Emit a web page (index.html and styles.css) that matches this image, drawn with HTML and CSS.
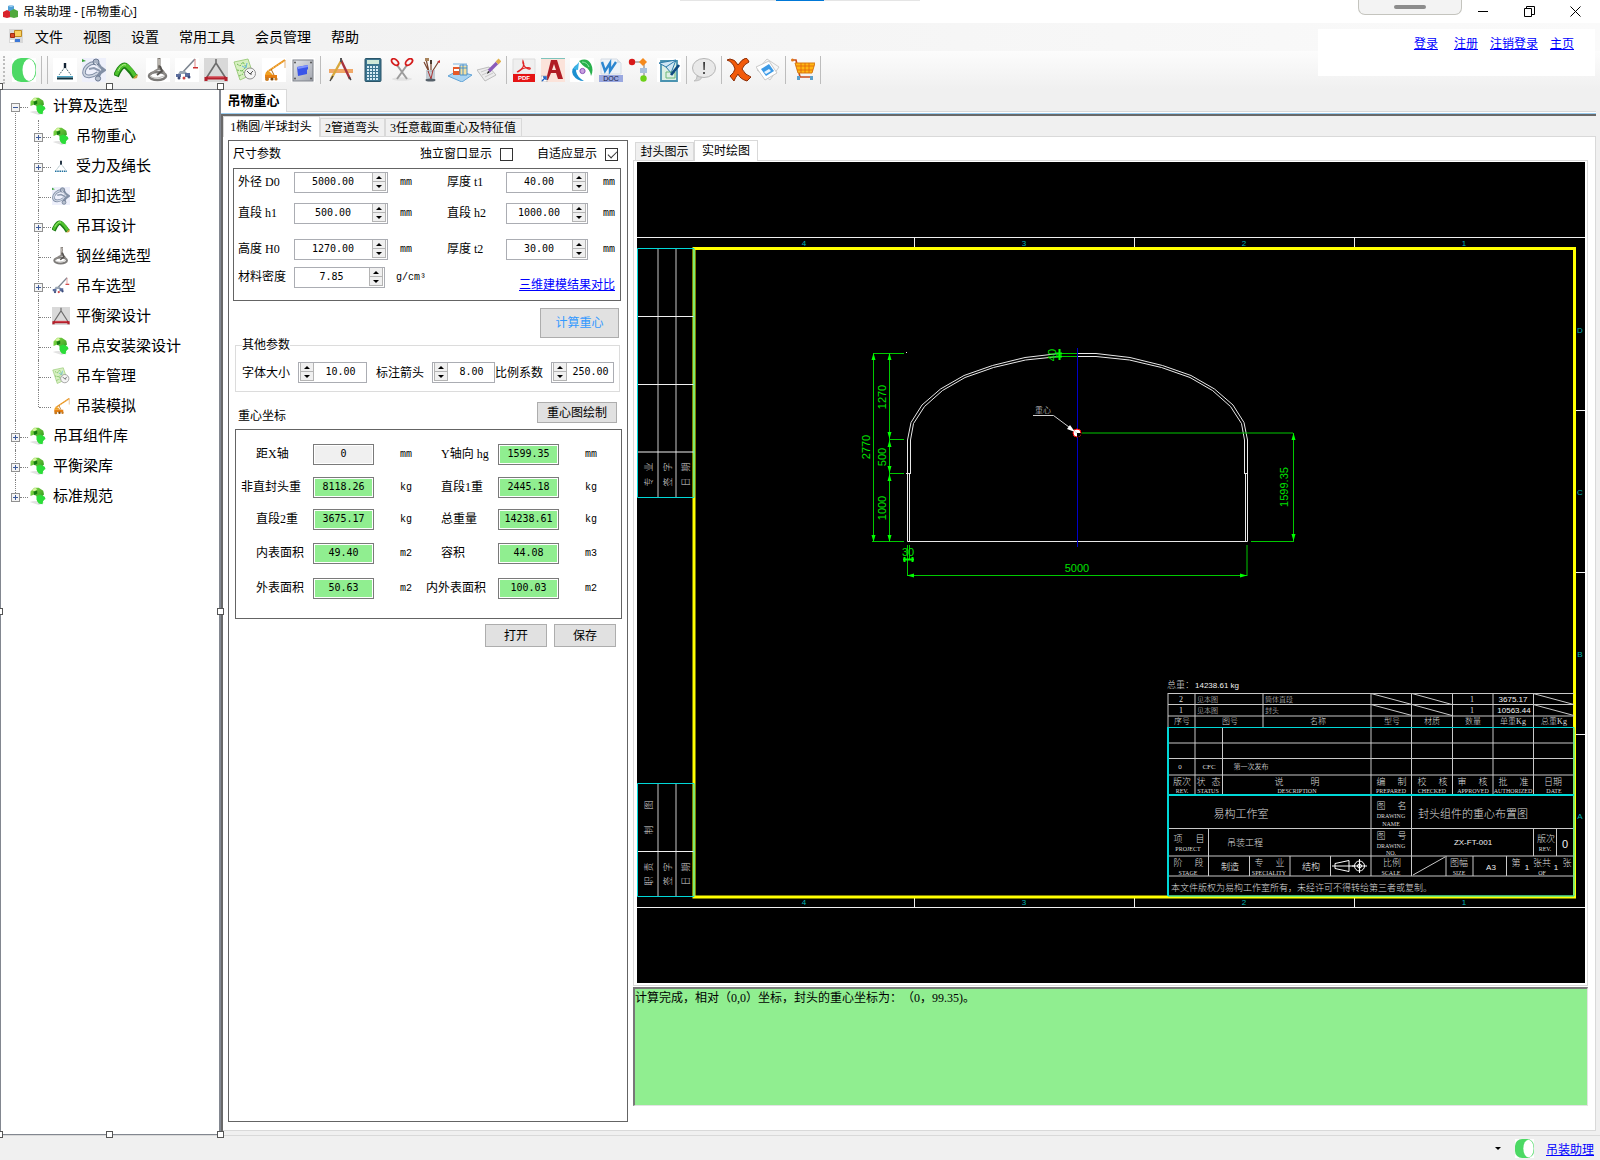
FILE: index.html
```html
<!DOCTYPE html>
<html lang="zh">
<head>
    <meta charset="UTF-8">
    <meta name="viewport" content="width=device-width, initial-scale=1.0">
    <title>吊装助理 - [吊物重心]</title>
    <link rel="stylesheet" href="styles.css">
</head>
<body>
    <!-- 图标库 -->
    <svg class="sprite" aria-hidden="true">
        <defs>
            <linearGradient id="gGreen" x1="0" y1="0" x2="1" y2="1"><stop offset="0" stop-color="#8be04a"/><stop offset="1" stop-color="#1d8a16"/></linearGradient>
            <linearGradient id="gSteel" x1="0" y1="0" x2="1" y2="1"><stop offset="0" stop-color="#e3e5ea"/><stop offset="1" stop-color="#a3a7b0"/></linearGradient>
        </defs>
        <symbol id="i-toggle" viewBox="0 0 24 24">
            <path d="M0 0h24v24H0z" fill="#fff"/><rect width="24" height="24" rx="9" fill="#4cd964"/><ellipse cx="17" cy="12" rx="6.5" ry="11" fill="#fff"/>
        </symbol>
        <symbol id="i-force" viewBox="0 0 24 24">
            <path d="M0 0h24v24H0z" fill="#fff"/><path d="M12 9L6 17M12 9l6 8" stroke="#4a6a75" stroke-width="1" stroke-dasharray="2 1" fill="none"/><path d="M12 5v5" stroke="#123" stroke-width="2.400"/><path d="M4 18h16v1.500H4z" fill="#4fa8c8"/><path d="M4 19.500h16v2H4z" fill="#11323e"/>
        </symbol>
        <symbol id="i-force-sm" viewBox="0 0 24 24">
            <path d="M12 9L6 17M12 9l6 8" stroke="#7d99a3" stroke-dasharray="2 1" fill="none"/><path d="M12 5v5" stroke="#123" stroke-width="2.400"/><path d="M4 19h16" stroke="#1e6f9c" stroke-width="2" stroke-dasharray="2 1"/>
        </symbol>
        <symbol id="i-shackle" viewBox="0 0 24 24">
            <path d="M0 0h24v24H0z" fill="#eef0fb"/><path d="M0 1l4 2-4 1z" fill="#39a339"/><path d="M14 5C8 4 2 9 2 15c1 5 8 4 14 0" fill="none" stroke="#7d8ba3" stroke-width="3.6"/><path d="M14 5C8 4 2 9 2 15c1 5 8 4 14 0" fill="none" stroke="#cfd6e2" stroke-width="1.6"/><path d="M14 3l4 6 4 3-4 3-3 6" fill="none" stroke="#8390a6" stroke-width="3.4"/><path d="M7 11l5-1 6 3" fill="none" stroke="#8d99ae" stroke-width="2"/><circle cx="14" cy="4" r="3" fill="#a9b3c4" stroke="#6c7a92"/><circle cx="16" cy="20.5" r="2.6" fill="#b7c0ce" stroke="#6c7a92"/><path d="M13 5l6 7" stroke="#e8ecf3"/>
        </symbol>
        <symbol id="i-lug" viewBox="0 0 24 24">
            <path d="M2 18Q8 4 13 9T21 19" fill="none" stroke="#1b7a14" stroke-width="6"/><path d="M2 17Q8 4 13 8T21 18" fill="none" stroke="#4fc22e" stroke-width="3.6"/><path d="M4 13Q8 5 12 7" fill="none" stroke="#b5f08a"/><path d="M19 21l4-1 1-4-3 2z" fill="#c9a23a"/>
        </symbol>
        <symbol id="i-rope" viewBox="0 0 24 24">
            <path d="M0 0h24v24H0z" fill="#fff"/><path d="M13 0v12" stroke="#77726c" stroke-width="3"/><path d="M12 1l2 1-2 1 2 1-2 1 2 1-2 1" stroke="#c9c4bd" fill="none"/><ellipse cx="11.500" cy="18" rx="8.500" ry="4" fill="none" stroke="#7c7a78" stroke-width="2.600"/><path d="M4 17q5-5 9-6 5 1 6 6" fill="none" stroke="#8f8c88" stroke-width="1.800"/><path d="M4 18q5 4 14 0" fill="none" stroke="#c4c2bf" stroke-width="1.2"/><path d="M14 8l2 5-5 4" fill="none" stroke="#55524f" stroke-width="2"/>
        </symbol>
        <symbol id="i-crane" viewBox="0 0 24 24">
            <path d="M0 0h24v24H0z" fill="#fff"/><path d="M7 15L20 1" stroke="#7c8590" stroke-width="1.600"/><path d="M20 1v8" stroke="#d88"/><path d="M18 9h5v1.500h-5z" fill="#c33"/><path d="M5 13l5 0 3 3H3z" fill="#9aa6b4"/><path d="M1 16h5v3H1zM10 15h5v4h-5z" fill="#5a6c9c"/><circle cx="4" cy="20" r="1.500" fill="#3a4a7a"/><circle cx="9" cy="20" r="1.500" fill="#c44"/><circle cx="14" cy="19" r="1.500" fill="#3a4a7a"/>
        </symbol>
        <symbol id="i-beam" viewBox="0 0 24 24">
            <path d="M0 0h24v24H0z" fill="#d9d9d9"/><path d="M12 1v4L3 19M12 5l9 14" fill="none" stroke="#6c6c6c" stroke-width="1.600"/><path d="M2 20h20M2 19v4M22 19v4" stroke="#b3202c" stroke-width="3"/><path d="M4 19h16" stroke="#e4606a"/>
        </symbol>
        <symbol id="i-map" viewBox="0 0 24 24">
            <path d="M1 4l14-3 5 15-13 6z" fill="#d7f0c0" stroke="#8fc46c" stroke-width=".8"/><path d="M4 6l3 2 3-4 3 5-4 4 5 4M4 12l5 1M6 18l4-2" fill="none" stroke="#6cb852" stroke-dasharray="2 1"/><path d="M9 8l4 2 1-5" fill="none" stroke="#6ab5dc"/><circle cx="17" cy="15.500" r="5.500" fill="#f4f4f4" stroke="#8e8e8e"/><path d="M14 13l3 3 3-3M17 16h2" stroke="#555" fill="none"/>
        </symbol>
        <symbol id="i-crane2" viewBox="0 0 24 24">
            <path d="M0 0h24v24H0z" fill="#fff"/><path d="M5 14L23 2" stroke="#e8921c" stroke-width="2"/><path d="M6 13L23 3" stroke="#ffd58a" stroke-dasharray="1 2"/><path d="M23 2v8" stroke="#d9a05a" stroke-width=".8"/><path d="M4 14h4l3 3H3z" fill="#f0a020"/><path d="M3 17h12v3H3z" fill="#e87f10"/><path d="M9 11l3 6" stroke="#b56a10"/><circle cx="5" cy="21" r="2" fill="#c87a20"/><circle cx="10" cy="21" r="1.600" fill="#7a4a10"/><circle cx="14" cy="21" r="1.600" fill="#c87a20"/>
        </symbol>
        <symbol id="i-plate" viewBox="0 0 24 24">
            <path d="M0 0h24v24H0z" fill="#fff"/><rect x="2" y="2" width="20" height="21" fill="url(#gSteel)" stroke="#7d8088"/><path d="M6 9l11-2 0 4-1 1v4L7 18z" fill="#3a55e8"/><path d="M6 9l11-2v2L7 11z" fill="#7d92ff"/><g fill="#555"><circle cx="4" cy="4.500" r="1"/><circle cx="20" cy="4.500" r="1"/><circle cx="4" cy="20.500" r="1"/><circle cx="20" cy="20.500" r="1"/></g>
        </symbol>
        <symbol id="i-compass" viewBox="0 0 24 24">
            <path d="M0 11h24v4H0z" fill="#f0a868"/><path d="M12 3L2 21" stroke="#d8a83c" stroke-width="2.400"/><path d="M12 2l9 19" stroke="#a8323c" stroke-width="2.400"/><path d="M4 18l-3 5M20 19l2 3" stroke="#444" stroke-width="1.400"/><path d="M12 0v4" stroke="#555" stroke-width="2"/>
        </symbol>
        <symbol id="i-calc" viewBox="0 0 24 24">
            <rect x="4" y="0.500" width="16" height="23" rx="1" fill="#3c7590" stroke="#2a5568"/><path d="M6 2h12v4H6z" fill="#cfe8d8"/><g stroke="#d6ecf5" stroke-width="2" stroke-dasharray="2 1"><path d="M6 9h12M6 12h12M6 15h12M6 18h12M6 21h12"/></g>
        </symbol>
        <symbol id="i-scissors" viewBox="0 0 24 24">
            <ellipse cx="12" cy="21" rx="10" ry="1.800" fill="#e2e2e2"/><path d="M7 7l10 14M17 7L7 21" stroke="#9c9c9c" stroke-width="2"/><ellipse cx="5" cy="4" rx="4" ry="2.500" transform="rotate(40 5 4)" fill="none" stroke="#d41c1c" stroke-width="1.800"/><ellipse cx="19" cy="4" rx="4" ry="2.500" transform="rotate(-40 19 4)" fill="none" stroke="#d41c1c" stroke-width="1.800"/>
        </symbol>
        <symbol id="i-brush" viewBox="0 0 24 24">
            <path d="M10 14L7 1M12 14V3M13 14l7-11M10 14L5 4" stroke="#7a4630" stroke-width="1.200"/><path d="M6 0l4 0 0 3-4 0z" fill="#a8835c"/><path d="M11 2h2v4h-2z" fill="#4a3a30"/><path d="M18 4l3-2 0 3z" fill="#c33"/><path d="M7 12h9v9q-4 3-9 0z" fill="#b9c4cc" opacity=".85"/><path d="M9 13l3 8 2-9" stroke="#a33" fill="none"/><ellipse cx="11.500" cy="22" rx="5" ry="1.500" fill="#56616a"/>
        </symbol>
        <symbol id="i-site" viewBox="0 0 24 24">
            <path d="M0 18l9-5 15 4-10 7z" fill="#a9d4f2" stroke="#62a3d6"/><path d="M5 9h7v8H5z" fill="#e65a28"/><path d="M6 11h5v2H6z" fill="#fff"/><path d="M12 8h7v9h-7z" fill="#f2e0a0"/><path d="M12 7h7v10h-7zM12 10h7M15 6v11" fill="none" stroke="#4a90c8"/><path d="M5 6h14" stroke="#7fb4dc"/>
        </symbol>
        <symbol id="i-pad" viewBox="0 0 24 24">
            <path d="M0 12l12-3 7 8-11 6z" fill="#ececec" stroke="#bdbdbd"/><path d="M4 14l8-3M5 17l9-4M8 19l8-4" stroke="#c9c9c9"/><path d="M12 13L20 5" stroke="#8a5bb8" stroke-width="3.400"/><path d="M20 5l3-3" stroke="#e0b04c" stroke-width="4"/><path d="M10 16l1-3 2 1z" fill="#222"/>
        </symbol>
        <symbol id="i-cad" viewBox="0 0 24 24">
            <path d="M0 0h24v24H0z" fill="#fbe3da"/><path d="M0 0h24v1H0z" fill="#7ec4bc"/><path d="M10 2h6l6 19h-5l-2-6h-5l-3 7H5zM13 6l-2 6h4z" fill="#b01c24" fill-rule="evenodd"/><path d="M0 18h6v6H0z" fill="#fff" stroke="#888" stroke-width=".5"/><path d="M1 23l3-3M2 19h3v3" stroke="#1c5fc0" stroke-width="1.400" fill="none"/>
        </symbol>
        <symbol id="i-globe" viewBox="0 0 24 24">
            <path d="M0 0h24v24H0z" fill="#fff"/><path d="M8 6Q0 10 3 17q4 6 11 6-7-4-8-10z" fill="#1c8fd0"/><path d="M3 11l6-7-1 8z" fill="#3cb4e6"/><path d="M9 3q8-4 12 3 3 6 0 12-1-7-6-9-3-2-6-6z" fill="#28b04c"/><path d="M12 4q5 0 7 5" fill="none" stroke="#8ce8a4"/><circle cx="12.500" cy="13" r="2.600" fill="#c8a0e0" stroke="#8a50b8"/>
        </symbol>
        <symbol id="i-flow" viewBox="0 0 24 24">
            <path d="M4 4h12M16 5v16" stroke="#777"/><circle cx="4" cy="4" r="3.200" fill="#d81818"/><path d="M15 0l4 4-4 4-4-4z" fill="#f58a1c"/><path d="M12 10h7v5h-7z" fill="#a9c0dc"/><circle cx="15.500" cy="20.500" r="3.200" fill="#6cd018"/>
        </symbol>
        <symbol id="i-sign" viewBox="0 0 24 24">
            <path d="M0 0h24v24H0z" fill="#fff"/><path d="M4 3h16v20H4z" fill="#dcefe4" stroke="#4a93b0" stroke-width="1.800"/><path d="M2 5l17-3-5 13-5-6zM9 9l9-6" fill="#cfe6f4" stroke="#2a7aa8"/><path d="M9 14h9v6H9z" fill="none" stroke="#6cb878"/><path d="M14 17l8-10" stroke="#0f4a80" stroke-width="2.800"/>
        </symbol>
        <symbol id="i-info" viewBox="0 0 24 24">
            <path d="M5 18q0 4-3 5 7 0 8-4z" fill="#d6d6d6" stroke="#a9a9a9" stroke-width=".6"/><ellipse cx="12" cy="10" rx="11.500" ry="9.500" fill="#e9e9e9" stroke="#b5b5b5"/><path d="M11.200 4h1.800l-.3 8h-1.200zM11.200 14h1.600v2h-1.600z" fill="#333"/>
        </symbol>
        <symbol id="i-close" viewBox="0 0 24 24">
            <path d="M0 2l3-1q5 0 8 6 4-6 8-7 2 1 3 4-5 2-7 7 3 6 9 8l-4 4q-7-2-9-7-3 4-4 7l-4-5q4-3 5-7Q6 4 0 2z" fill="#f25a0a" stroke="#8a2c04"/>
        </symbol>
        <symbol id="i-photo" viewBox="0 0 24 24">
            <path d="M1 12L11 1l12 8-9 13z" fill="#f6f6f6" stroke="#ccc"/><path d="M0 9l13-6 8 12-12 7z" fill="#fff" stroke="#c9c9c9"/><path d="M5 11l8-5 5 7-8 5z" fill="#3c9ae6"/><path d="M8 14l5-3 2 2-5 3z" fill="#e8f4ff"/>
        </symbol>
        <symbol id="i-cart" viewBox="0 0 24 24">
            <path d="M1 2h4l4 17h13" fill="none" stroke="#c94b1a" stroke-width="1.600"/><path d="M4 5h20l-3 10H7z" fill="#ffb612" stroke="#d97a10"/><path d="M5 8h18M6 12h16M10 5v10M14 5v10M18 5v10" stroke="#e0620c" stroke-width=".8"/><circle cx="1.500" cy="2" r="1.500" fill="#e07818"/><path d="M6 18h3v4H6zM19 18h3v4h-3z" fill="#5aa0cc"/>
        </symbol>
        <symbol id="i-leaf" viewBox="0 0 24 24">
            <path d="M1 20q8-3 20 1l-8 3z" fill="#e2e2e2"/><path d="M2 6l5-5 6 0 6 4 1 5-3 3 3 4-4 5-5-3 0-6-4-3-5 2z" fill="url(#gGreen)"/><path d="M10 12l5-2 6 3 1 3-3 2-1 5-5-1-3-5z" fill="#2bdd38"/><path d="M4 4l4-3 3 2-4 3z" fill="#d8f4a0"/><path d="M6 6l5-1 0 4-4 2z" fill="#147a10"/>
        </symbol>
    </svg>

    <!-- 标题栏 -->
    <header class="titlebar">
        <svg class="app-icon" viewBox="0 0 15 14"><path d="M5 1l3-1 3 1v5H5z" fill="#4f9fd6"/><path d="M0 7l4-2 4 2v5l-4 1-4-1z" fill="#d8232b"/><path d="M7 6l4-2 4 2v6l-4 1-4-1z" fill="#4fa83c"/><path d="M5 1l3-1 3 1-3 1z" fill="#a9d4f2"/></svg>
        <h1>吊装助理 - [吊物重心]</h1>
        <div class="win-controls">
            <button aria-label="最小化"><svg viewBox="0 0 11 11"><path d="M0 5.500h10"/></svg></button>
            <button aria-label="还原"><svg viewBox="0 0 11 11"><path d="M.5 2.500h7v8h-7zM2.500 2.500v-2h8v8h-3"/></svg></button>
            <button aria-label="关闭"><svg viewBox="0 0 11 11"><path d="M.5.500l10 10M10.500.500l-10 10"/></svg></button>
        </div>
        <div class="top-strip"></div>
        <div class="top-grip"></div>
    </header>

    <!-- 菜单栏 -->
    <nav class="menubar">
        <svg class="mdi-icon" viewBox="0 0 14 14"><path d="M0 0h14v14H0z" fill="#d8d8d8"/><path d="M5.500 1.500h7v6h-7z" fill="#f8d060" stroke="#c08a20"/><path d="M1.500 4.500h4v4h-4z" fill="#d84828" stroke="#a02c10"/><path d="M6 10h5v3H6z" fill="#3c78d8"/><path d="M1 11h4v2H1z" fill="#fff"/></svg>
        <button>文件</button>
        <button>视图</button>
        <button>设置</button>
        <button>常用工具</button>
        <button>会员管理</button>
        <button>帮助</button>
    </nav>

    <!-- 工具栏 -->
    <div class="toolbar">
        <button aria-label="开关"><svg><use href="#i-toggle"/></svg></button>
        <span class="sep"></span>
        <span class="sep"></span>
        <button aria-label="受力及绳长"><svg><use href="#i-force"/></svg></button>
        <button aria-label="卸扣选型"><svg><use href="#i-shackle"/></svg></button>
        <button class="wide" aria-label="吊耳设计"><svg><use href="#i-lug"/></svg></button>
        <button aria-label="钢丝绳选型"><svg><use href="#i-rope"/></svg></button>
        <button aria-label="吊车选型"><svg><use href="#i-crane"/></svg></button>
        <button aria-label="平衡梁设计"><svg><use href="#i-beam"/></svg></button>
        <button aria-label="吊车管理"><svg><use href="#i-map"/></svg></button>
        <button aria-label="吊装模拟"><svg><use href="#i-crane2"/></svg></button>
        <button aria-label="吊点"><svg><use href="#i-plate"/></svg></button>
        <span class="sep"></span>
        <button class="wide" aria-label="绘图"><svg><use href="#i-compass"/></svg></button>
        <button aria-label="计算器"><svg><use href="#i-calc"/></svg></button>
        <button aria-label="剪切"><svg><use href="#i-scissors"/></svg></button>
        <button aria-label="画笔"><svg><use href="#i-brush"/></svg></button>
        <button aria-label="场地"><svg><use href="#i-site"/></svg></button>
        <button aria-label="记事"><svg><use href="#i-pad"/></svg></button>
        <span class="sep"></span>
        <button aria-label="导出PDF">
            <svg viewBox="0 0 24 24"><path d="M1 1h22v15H1z" fill="#efefef" stroke="#ddd"/><path d="M11 3c3 6-2 9-6 11 3 0 3-3 8-4 4-1 6 0 5 1-3 1-8-4-7-8z" fill="none" stroke="#e02020" stroke-width="1.200"/><path d="M1 16h22v8H1z" fill="#e51414"/><text class="tag pdf" x="12" y="22">PDF</text></svg>
        </button>
        <button aria-label="导出CAD"><svg><use href="#i-cad"/></svg></button>
        <button aria-label="网络"><svg><use href="#i-globe"/></svg></button>
        <button aria-label="导出DOC">
            <svg viewBox="0 0 24 24"><path d="M2 1h16l4 4v11H2z" fill="#eef3f8" stroke="#d5dce4"/><path d="M18 1l4 4h-4z" fill="#d8dee6"/><path d="M3 4l3 9 5-8 0 8 6-9" fill="none" stroke="#2b86d0" stroke-width="2.400"/><path d="M0 17h24v7H0z" fill="#9aa8e0"/><text class="tag" x="12" y="23">DOC</text></svg>
        </button>
        <button aria-label="流程"><svg><use href="#i-flow"/></svg></button>
        <button aria-label="签名"><svg><use href="#i-sign"/></svg></button>
        <span class="sep"></span>
        <button aria-label="提示"><svg><use href="#i-info"/></svg></button>
        <span class="sep"></span>
        <button aria-label="退出"><svg><use href="#i-close"/></svg></button>
        <button aria-label="图片"><svg><use href="#i-photo"/></svg></button>
        <span class="sep"></span>
        <button aria-label="购物车"><svg><use href="#i-cart"/></svg></button>
        <span class="sep"></span>
    </div>
    <div class="account">
        <a href="#">登录</a>
        <a href="#">注册</a>
        <a href="#">注销登录</a>
        <a href="#">主页</a>
    </div>

    <div class="workspace">
        <!-- 左侧功能树 -->
        <aside class="sidebar">
            <ul class="tree">
                <li>
                    <div class="node"><i class="exp minus"></i><i class="dots"></i><svg><use href="#i-leaf"/></svg>计算及选型</div>
                    <ul>
                        <li><div class="node"><i class="exp"></i><i class="dots"></i><svg><use href="#i-leaf"/></svg>吊物重心</div></li>
                        <li><div class="node"><i class="exp"></i><i class="dots"></i><svg><use href="#i-force-sm"/></svg>受力及绳长</div></li>
                        <li><div class="node"><i class="dots leaf"></i><svg><use href="#i-shackle"/></svg>卸扣选型</div></li>
                        <li><div class="node"><i class="exp"></i><i class="dots"></i><svg><use href="#i-lug"/></svg>吊耳设计</div></li>
                        <li><div class="node"><i class="dots leaf"></i><svg><use href="#i-rope"/></svg>钢丝绳选型</div></li>
                        <li><div class="node"><i class="exp"></i><i class="dots"></i><svg><use href="#i-crane"/></svg>吊车选型</div></li>
                        <li><div class="node"><i class="dots leaf"></i><svg><use href="#i-beam"/></svg>平衡梁设计</div></li>
                        <li><div class="node"><i class="dots leaf"></i><svg><use href="#i-leaf"/></svg>吊点安装梁设计</div></li>
                        <li><div class="node"><i class="dots leaf"></i><svg><use href="#i-map"/></svg>吊车管理</div></li>
                        <li><div class="node"><i class="dots leaf"></i><svg><use href="#i-crane2"/></svg>吊装模拟</div></li>
                    </ul>
                </li>
                <li><div class="node"><i class="exp"></i><i class="dots"></i><svg><use href="#i-leaf"/></svg>吊耳组件库</div></li>
                <li><div class="node"><i class="exp"></i><i class="dots"></i><svg><use href="#i-leaf"/></svg>平衡梁库</div></li>
                <li><div class="node"><i class="exp"></i><i class="dots"></i><svg><use href="#i-leaf"/></svg>标准规范</div></li>
            </ul>
            <i class="grip t l"></i><i class="grip t c"></i><i class="grip t r"></i>
            <i class="grip m l"></i><i class="grip m r"></i>
            <i class="grip b l"></i><i class="grip b c"></i><i class="grip b r"></i>
        </aside>

        <main class="main">
            <div class="doc-tabs"><button class="doc-tab">吊物重心</button></div>
            <div class="doc">
                <div class="tabs page-tabs">
                    <button class="active">1椭圆/半球封头</button>
                    <button>2管道弯头</button>
                    <button>3任意截面重心及特征值</button>
                </div>
                <div class="page">
                    <!-- 参数面板 -->
                    <form class="panel">
                        <div class="panel-head">
                            <span>尺寸参数</span>
                            <label class="check">独立窗口显示<input type="checkbox"></label>
                            <label class="check">自适应显示<input type="checkbox" checked></label>
                        </div>

                        <div class="box size-grid">
                            <label for="d0">外径 D0</label>
                            <div class="spin"><input id="d0" value="5000.00"><div class="arrows"><button type="button" aria-label="增"></button><button type="button" aria-label="减"></button></div></div>
                            <span class="unit">mm</span>
                            <label for="t1">厚度 t1</label>
                            <div class="spin"><input id="t1" value="40.00"><div class="arrows"><button type="button" aria-label="增"></button><button type="button" aria-label="减"></button></div></div>
                            <span class="unit">mm</span>

                            <label for="h1">直段 h1</label>
                            <div class="spin"><input id="h1" value="500.00"><div class="arrows"><button type="button" aria-label="增"></button><button type="button" aria-label="减"></button></div></div>
                            <span class="unit">mm</span>
                            <label for="h2">直段 h2</label>
                            <div class="spin"><input id="h2" value="1000.00"><div class="arrows"><button type="button" aria-label="增"></button><button type="button" aria-label="减"></button></div></div>
                            <span class="unit">mm</span>

                            <label for="h0">高度 H0</label>
                            <div class="spin"><input id="h0" value="1270.00"><div class="arrows"><button type="button" aria-label="增"></button><button type="button" aria-label="减"></button></div></div>
                            <span class="unit">mm</span>
                            <label for="t2">厚度 t2</label>
                            <div class="spin"><input id="t2" value="30.00"><div class="arrows"><button type="button" aria-label="增"></button><button type="button" aria-label="减"></button></div></div>
                            <span class="unit">mm</span>

                            <label for="rho">材料密度</label>
                            <div class="spin density"><input id="rho" value="7.85"><div class="arrows"><button type="button" aria-label="增"></button><button type="button" aria-label="减"></button></div></div>
                            <span class="unit per">g/cm³</span>
                            <a class="compare" href="#">三维建模结果对比</a>
                        </div>

                        <div class="actions"><button type="button" class="btn primary">计算重心</button></div>

                        <fieldset class="other">
                            <legend>其他参数</legend>
                            <div class="other-row">
                                <div class="field">
                                    <label for="font">字体大小</label>
                                    <div class="spin left font"><input id="font" value="10.00"><div class="arrows"><button type="button" aria-label="增"></button><button type="button" aria-label="减"></button></div></div>
                                </div>
                                <div class="field">
                                    <label for="arrow">标注箭头</label>
                                    <div class="spin left"><input id="arrow" value="8.00"><div class="arrows"><button type="button" aria-label="增"></button><button type="button" aria-label="减"></button></div></div>
                                </div>
                                <div class="field">
                                    <label for="scale">比例系数</label>
                                    <div class="spin left"><input id="scale" value="250.00"><div class="arrows"><button type="button" aria-label="增"></button><button type="button" aria-label="减"></button></div></div>
                                </div>
                            </div>
                        </fieldset>

                        <div class="result-head">
                            <span>重心坐标</span>
                            <button type="button" class="btn small">重心图绘制</button>
                        </div>

                        <div class="box result-grid">
                            <label for="r1">距X轴</label><input id="r1" class="gray" value="0" readonly><span class="unit">mm</span>
                            <label for="r2">Y轴向 hg</label><input id="r2" value="1599.35" readonly><span class="unit">mm</span>
                            <label for="r3" class="long">非直封头重</label><input id="r3" value="8118.26" readonly><span class="unit">kg</span>
                            <label for="r4">直段1重</label><input id="r4" value="2445.18" readonly><span class="unit">kg</span>
                            <label for="r5">直段2重</label><input id="r5" value="3675.17" readonly><span class="unit">kg</span>
                            <label for="r6">总重量</label><input id="r6" value="14238.61" readonly><span class="unit">kg</span>
                            <label for="r7">内表面积</label><input id="r7" value="49.40" readonly><span class="unit">m2</span>
                            <label for="r8">容积</label><input id="r8" value="44.08" readonly><span class="unit">m3</span>
                            <label for="r9">外表面积</label><input id="r9" value="50.63" readonly><span class="unit">m2</span>
                            <label for="r10" class="long">内外表面积</label><input id="r10" value="100.03" readonly><span class="unit">m2</span>
                        </div>

                        <div class="file-row">
                            <button type="button" class="btn">打开</button>
                            <button type="button" class="btn">保存</button>
                        </div>
                    </form>

                    <!-- 绘图区 -->
                    <section class="view">
                        <div class="tabs view-tabs">
                            <button>封头图示</button>
                            <button class="active">实时绘图</button>
                        </div>
                        <div class="canvas">
                            <svg viewBox="637 162 948 821">
                                <!-- 图框 -->
                                <g class="white">
                                    <path d="M637 237.500H1585M637 907.500H1585"/>
                                    <path d="M914.500 238v10M1134.500 238v10M1354.500 238v10M914.500 898v10M1134.500 898v10M1354.500 898v10"/>
                                    <path d="M1575 410.500h10M1575 572.500h10M1575 734.500h10"/>
                                </g>
                                <rect class="frame" x="694" y="248.500" width="880.500" height="648.500"/>
                                <g class="zone">
                                    <text x="804" y="246">4</text><text x="1024" y="246">3</text><text x="1244" y="246">2</text><text x="1464" y="246">1</text>
                                    <text x="804" y="905">4</text><text x="1024" y="905">3</text><text x="1244" y="905">2</text><text x="1464" y="905">1</text>
                                    <text x="1580" y="333">D</text><text x="1580" y="495">C</text><text x="1580" y="657">B</text><text x="1580" y="819">A</text>
                                </g>
                                <!-- 左侧会签栏 -->
                                <g class="gray-line"><path d="M658 249v248M676 249v248M658 784v112M676 784v112"/></g>
                                <g class="white"><path d="M638 316.500h56M638 384.500h56M638 452h56M638 851.500h56"/></g>
                                <g class="cyan"><path d="M694 248.500H637.500V497.500H694zM694 783.500H637.500V896.500H694z"/></g>
                                <g class="cn side">
                                    <text transform="translate(652 482) rotate(-90)">专</text><text transform="translate(652 467) rotate(-90)">业</text>
                                    <text transform="translate(671 482) rotate(-90)">签</text><text transform="translate(671 467) rotate(-90)">字</text>
                                    <text transform="translate(689 482) rotate(-90)">日</text><text transform="translate(689 467) rotate(-90)">期</text>
                                    <text transform="translate(652 805) rotate(-90)">图</text><text transform="translate(652 830) rotate(-90)">制</text>
                                    <text transform="translate(652 881) rotate(-90)">职</text><text transform="translate(652 867) rotate(-90)">责</text>
                                    <text transform="translate(671 881) rotate(-90)">签</text><text transform="translate(671 867) rotate(-90)">字</text>
                                    <text transform="translate(689 881) rotate(-90)">日</text><text transform="translate(689 867) rotate(-90)">期</text>
                                </g>
                                <!-- 封头轮廓 -->
                                <g class="shape">
                                    <path d="M907.500 541.500V440L911 422.500 922 405 940.500 389 964 375.500 992.500 365.500 1025 357.500 1059 353.500H1096L1130 357.500 1162.500 365.500 1191 375.500 1214.500 389 1233 405 1244 422.500 1247.500 440V541.500z"/>
                                    <path d="M910.500 473.500V440L913.500 423.500 924.500 406.500 942.500 390.500 965 377.500 993.500 367.500 1025.500 360 1059 356.500H1096L1129.500 360 1161.500 367.500 1190 377.500 1212.500 390.500 1230.500 406.500 1241.500 423.500 1244.500 440V473.500"/>
                                    <path d="M906 473.500h5M1244 473.500h4M909.500 474v67M1245.500 474v67M906 352.500h1"/>
                                </g>
                                <path class="axis" d="M1077.500 348V547"/>
                                <!-- 尺寸标注 -->
                                <g class="dim">
                                    <path d="M873.500 353.500V541.500M889.500 353.500V541.500M873 353.500h31M889 439.500h15M889 473.500h15M872 541.500h32"/>
                                    <path d="M907.500 545v31M909.500 545v15M1247 545v31M907 575.500h340"/>
                                    <path d="M1082 433h211M1293.500 433v108M1251 541.500h43"/>
                                    <path d="M1059 353.500h18M1059 356.500h18"/>
                                </g>
                                <path class="dim thick" d="M1059.500 349v11M1056 353.500h6M1056 356.500h6M903 559.500h11M904.500 557v5M912.500 557v5"/>
                                <g class="arrow">
                                    <path d="M873.500 353l2 7h-4zM873.500 542l2-7h-4zM889.500 353l2 7h-4zM889.500 439l2-7h-4zM889.500 440l2 7h-4zM889.500 473l2-7h-4zM889.500 474l2 7h-4zM889.500 542l2-7h-4zM1293.500 433l2 7h-4zM1293.500 541l2-7h-4zM907 575.500l7-2v4zM1247 575.500l-7-2v4z"/>
                                </g>
                                <g class="dim-text">
                                    <text transform="translate(870 447) rotate(-90)">2770</text>
                                    <text transform="translate(886 397) rotate(-90)">1270</text>
                                    <text transform="translate(886 457) rotate(-90)">500</text>
                                    <text transform="translate(886 508) rotate(-90)">1000</text>
                                    <text transform="translate(1288 487) rotate(-90)">1599.35</text>
                                    <text transform="translate(1056 355) rotate(-90)">40</text>
                                    <text x="908" y="556">30</text>
                                    <text x="1077" y="572">5000</text>
                                </g>
                                <!-- 重心标记 -->
                                <circle cx="1077" cy="433" r="4" fill="#fff" stroke="#f00"/>
                                <path d="M1077 433h4a4 4 0 0 1-4 4z" fill="#000"/>
                                <path class="leader" d="M1033 415.500h20.500L1077 433"/>
                                <path d="M1075 432l-8-3 3-4z" fill="#fff"/>
                                <text class="cn tiny" x="1043" y="413">重心</text>

                                <!-- 标题栏表格 -->
                                <g class="gray-line">
                                    <path d="M1168 693.500H1574M1168 704.500H1574M1168 716H1574M1168 743H1574M1168 758.500H1574M1168 775H1574M1168 828.500H1574M1168 856H1574M1168 876H1574"/>
                                    <path d="M1168 693V727M1195 693V795M1222.500 727V795M1263 693V727M1371 693V876M1411.500 693V876M1452.500 693V795M1493 693V795M1533.500 693V795"/>
                                    <path d="M1208.500 828V876M1249.500 856V876M1290 856V876M1330.500 856V876M1533.500 828V856M1556.500 828V856M1446 856V876M1473 856V876M1506.500 856V876"/>
                                    <path d="M1371 693.500l41 11M1412 693.500l40 11M1533 693.500l41 11M1371 704.500l41 11M1412 704.500l40 11M1533 704.500l41 11M1413 875l32-18"/>
                                </g>
                                <g class="cyan"><path d="M1168 727.500H1574V896H1168z"/></g>
                                <g class="cyan bold"><path d="M1168 727V896M1168 795H1574"/></g>
                                <g class="symbol">
                                    <path d="M1335 863.500l14-3v11l-14-3zM1332 866h22"/><circle cx="1359.500" cy="866" r="5"/><circle cx="1359.500" cy="866" r="2"/><path d="M1352 866h15M1359.500 859v14"/>
                                </g>
                                <g class="sans">
                                    <text x="1195" y="688">14238.61 kg</text>
                                    <text class="mid" x="1513" y="702">3675.17</text><text class="mid" x="1514" y="713">10563.44</text>
                                    <text class="mid" x="1473" y="845">ZX-FT-001</text><text class="mid s11" x="1565" y="848">0</text>
                                    <text class="mid" x="1491" y="870">A3</text><text class="mid" x="1527" y="870">1</text><text class="mid" x="1556" y="870">1</text>
                                </g>
                                <g class="cn s7">
                                    <text class="start" x="1197" y="702">见本图</text><text class="start" x="1197" y="713">见本图</text><text class="start" x="1265" y="702">筒体直段</text><text class="start" x="1265" y="713">封头</text>
                                    <text x="1180" y="769">0</text><text x="1209" y="769">CFC</text><text class="hi" x="1251" y="769">第一次发布</text>
                                </g>
                                <g class="cn s8">
                                    <text x="1181" y="702">2</text><text x="1181" y="713">1</text><text x="1472" y="702">1</text><text x="1472" y="713">1</text>
                                    <text x="1182" y="724">序号</text><text x="1230" y="724">图号</text><text x="1318" y="724">名称</text><text x="1392" y="724">型号</text><text x="1432" y="724">材质</text><text x="1473" y="724">数量</text><text x="1513" y="724">单重Kg</text><text x="1554" y="724">总重Kg</text>
                                </g>
                                <g class="cn s9">
                                    <text class="start" x="1167" y="688">总重：</text>
                                    <text x="1182" y="785">版次</text><text x="1201" y="785">状</text><text x="1216" y="785">态</text><text x="1279" y="785">说</text><text x="1315" y="785">明</text>
                                    <text x="1381" y="785">编</text><text x="1402" y="785">制</text><text x="1422" y="785">校</text><text x="1443" y="785">核</text><text x="1462" y="785">审</text><text x="1483" y="785">核</text><text x="1503" y="785">批</text><text x="1524" y="785">准</text><text x="1553" y="785">日期</text>
                                    <text x="1381" y="809">图</text><text x="1402" y="809">名</text><text x="1381" y="839">图</text><text x="1402" y="839">号</text>
                                    <text x="1178" y="842">项</text><text x="1200" y="842">目</text><text x="1178" y="866">阶</text><text x="1199" y="866">段</text><text x="1259" y="866">专</text><text x="1280" y="866">业</text>
                                    <text x="1392" y="866">比例</text><text x="1459" y="866">图幅</text><text x="1516" y="866">第</text><text x="1542" y="866">张共</text><text x="1567" y="866">张</text><text x="1546" y="842">版次</text>
                                    <text x="1245" y="846">吊装工程</text><text class="hi" x="1230" y="870">制造</text><text class="hi" x="1311" y="870">结构</text>
                                    <text class="start" x="1171" y="891">本文件版权为易构工作室所有，未经许可不得转给第三者或复制。</text>
                                </g>
                                <g class="cn s11"><text x="1241" y="818">易构工作室</text><text x="1473" y="818">封头组件的重心布置图</text></g>
                                <g class="en">
                                    <text x="1182" y="793">REV.</text><text x="1208" y="793">STATUS</text><text x="1297" y="793">DESCRIPTION</text><text x="1391" y="793">PREPARED</text><text x="1432" y="793">CHECKED</text><text x="1473" y="793">APPROVED</text><text x="1513" y="793">AUTHORIZED</text><text x="1554" y="793">DATE</text>
                                    <text x="1391" y="818">DRAWING</text><text x="1391" y="826">NAME</text><text x="1391" y="848">DRAWING</text><text x="1391" y="855">NO.</text>
                                    <text x="1188" y="851">PROJECT</text><text x="1188" y="875">STAGE</text><text x="1269" y="875">SPECIALITY</text><text x="1391" y="875">SCALE</text><text x="1459" y="875">SIZE</text><text x="1542" y="875">OF</text><text x="1545" y="851">REV.</text>
                                </g>
                            </svg>
                        </div>
                        <textarea class="output" aria-label="计算结果" readonly>计算完成，相对（0,0）坐标，封头的重心坐标为：（0，99.35)。</textarea>
                    </section>
                </div>
            </div>
        </main>
    </div>

    <!-- 状态栏 -->
    <footer class="statusbar">
        <i class="drop"></i>
        <svg><use href="#i-toggle"/></svg>
        <a href="#">吊装助理</a>
    </footer>
</body>
</html>
```

FILE: styles.css
```css
:root {
    --face: #f0f0f0;
    --line: #d9d9d9;
    --dark: #646464;
    --btn: #e1e1e1;
    --btn-border: #adadad;
    --green: #90ee90;
    --link: #0000ff;
}

* {
    box-sizing: border-box;
    margin: 0;
    padding: 0;
}

body {
    position: relative;
    display: flex;
    flex-direction: column;
    height: 100vh;
    font-family: "Liberation Serif", "Noto Sans CJK SC", sans-serif;
    font-size: 12px;
    line-height: 14px;
    text-spacing-trim: space-all;
    color: #000;
    background: var(--face);
}

button, input, textarea {
    font: inherit;
    color: inherit;
}

a { color: var(--link); }

ul { list-style: none; }

.sprite {
    position: absolute;
    width: 0;
    height: 0;
}

/* 标题栏 */
.titlebar {
    position: relative;
    display: flex;
    flex: none;
    align-items: center;
    height: 23px;
    padding-left: 3px;
    background: #fff;
    font-family: "Open Sans", "Noto Sans CJK SC", sans-serif;
}

.app-icon {
    width: 15px;
    height: 14px;
    margin-right: 5px;
}

.titlebar h1 {
    font-size: 12px;
    font-weight: normal;
}

.win-controls {
    display: flex;
    margin-left: auto;
    padding-right: 2px;
}

.win-controls button {
    width: 46px;
    height: 20px;
    border: none;
    background: none;
}

.win-controls svg {
    display: block;
    width: 11px;
    height: 11px;
    margin: 0 auto;
    fill: none;
    stroke: #000;
}

.top-strip {
    position: absolute;
    top: 0;
    left: 50%;
    width: 240px;
    height: 1px;
    margin-left: -120px;
    background: linear-gradient(90deg, #e5e5e5 96px, #0078d7 96px, #0078d7 144px, #e5e5e5 144px);
}

.top-grip {
    position: absolute;
    top: 0;
    right: 138px;
    width: 104px;
    height: 15px;
    border: 1px solid #c4c4be;
    border-top: none;
    border-radius: 0 0 7px 7px;
    background: #f3f3f3;
}

.top-grip::after {
    content: "";
    display: block;
    width: 32px;
    height: 4px;
    margin: 5px auto 0;
    border-radius: 2px;
    background: #8c8c8c;
}

/* 菜单栏 */
.menubar {
    display: flex;
    flex: none;
    align-items: center;
    height: 28px;
    padding: 0 0 2px 9px;
    background: linear-gradient(90deg, #f0f0f0, #fafafa);
}

.mdi-icon {
    width: 14px;
    height: 14px;
    margin-right: 2px;
}

.menubar button {
    padding: 0 10px;
    border: none;
    background: none;
    font-family: "Noto Sans CJK SC", sans-serif;
    font-size: 14px;
    line-height: 24px;
}

/* 工具栏 */
.toolbar {
    display: flex;
    flex: none;
    align-items: center;
    gap: 5px;
    height: 38px;
    padding-left: 12px;
    background: linear-gradient(#fcfcfc, #f0f0f0);
}

.toolbar button {
    width: 24px;
    height: 24px;
    border: none;
    background: none;
}

.toolbar .wide { margin: 0 3px; }

.toolbar button:first-child {
    position: relative;
}

.toolbar button:first-child::before {
    content: "";
    position: absolute;
    left: -9px;
    top: -2px;
    height: 28px;
    border-left: 2px dotted #bdbdbd;
}

.toolbar svg {
    display: block;
    width: 24px;
    height: 24px;
}

.tag {
    fill: #111a4a;
    font-family: "Liberation Sans", sans-serif;
    font-size: 7px;
    text-anchor: middle;
}

.tag.pdf {
    fill: #fff;
    font-size: 6px;
    font-weight: bold;
}

.sep {
    width: 1px;
    height: 28px;
    background: #bdbdbd;
}

.account {
    position: absolute;
    top: 29px;
    right: 5px;
    display: flex;
    width: 277px;
    height: 47px;
    padding: 8px 21px 0 0;
    justify-content: flex-end;
    gap: 12px;
    background: #fff;
}

.account a:first-child { margin-right: 4px; }

/* 主体 */
.workspace {
    display: flex;
    flex: 1;
}

/* 左侧树 */
.sidebar {
    position: relative;
    flex: none;
    width: 221px;
    border: 1px solid #828790;
    border-right: 2px solid #828790;
    background: #fff;
    font-family: "Noto Sans CJK SC", sans-serif;
    font-size: 15px;
}

.tree ul { padding-left: 23px; }

.tree li { position: relative; }

.tree li::before {
    content: "";
    position: absolute;
    top: 0;
    bottom: 0;
    left: 14px;
    border-left: 1px dotted #808080;
}

.tree li:last-child::before {
    bottom: auto;
    height: 17px;
}

.tree > li:first-child::before { top: 17px; }

.node {
    position: relative;
    display: flex;
    align-items: center;
    height: 30px;
    padding: 0 0 1px 10px;
}

.node svg {
    width: 18px;
    height: 18px;
    margin: 3px 6px 0 1px;
}

.exp {
    width: 9px;
    height: 9px;
    margin-top: 5px;
    border: 1px solid #919191;
    background:
        linear-gradient(#3c5a9a, #3c5a9a) center / 5px 1px no-repeat,
        linear-gradient(#3c5a9a, #3c5a9a) center / 1px 5px no-repeat,
        #f4f4f4;
}

.exp.minus {
    background:
        linear-gradient(#3c5a9a, #3c5a9a) center / 5px 1px no-repeat,
        #f4f4f4;
}

.dots {
    width: 8px;
    margin-top: 5px;
    border-top: 1px dotted #808080;
}

.dots.leaf {
    width: 12px;
    margin-left: 5px;
}

.grip {
    position: absolute;
    width: 7px;
    height: 7px;
    border: 1px solid #555;
    background: #fff;
}

.grip.t { top: -7px; }
.grip.m { top: 50%; margin-top: -4px; }
.grip.b { bottom: -4px; }
.grip.l { left: -5px; }
.grip.c { left: 50%; margin-left: -4px; }
.grip.r { right: -5px; }

/* 文档区 */
.main {
    display: flex;
    flex-direction: column;
    flex: 1;
    padding: 0 4px 4px 0;
}

.doc-tabs {
    height: 23px;
    border-bottom: 1px solid var(--line);
}

.doc-tab {
    width: 66px;
    height: 23px;
    padding-bottom: 2px;
    border: 1px solid var(--line);
    border-width: 1px 1px 0 0;
    background: #fff;
    font-family: "Noto Sans CJK SC", sans-serif;
    font-size: 13px;
    font-weight: bold;
}

.doc {
    display: flex;
    flex-direction: column;
    flex: 1;
    border-top: 1px solid #fff;
    box-shadow: inset 0 1px 0 #99cbee, inset 2px 3px 0 #696969;
    padding: 3px 0 0 2px;
}

.tabs {
    display: flex;
    align-items: flex-end;
}

.tabs button {
    border: 1px solid var(--line);
    border-bottom: none;
    background: var(--face);
    white-space: nowrap;
}

.tabs .active {
    position: relative;
    margin-bottom: -1px;
    background: #fff;
}

.page-tabs { height: 20px; }

.page-tabs button {
    height: 18px;
    padding: 0 5px 0 4px;
}

.page-tabs .active {
    height: 21px;
    width: 97px;
}

.page {
    display: flex;
    gap: 5px;
    flex: 1;
    padding: 3px 7px 0 5px;
    border: 1px solid var(--line);
    border-left: none;
    background: #fff;
}

/* 参数面板 */
.panel {
    flex: none;
    width: 400px;
    margin-bottom: 8px;
    border: 1px solid var(--dark);
}

.panel-head {
    display: flex;
    align-items: center;
    height: 27px;
    padding: 0 9px 1px 4px;
}

.panel-head span { margin-right: auto; }

.check {
    display: flex;
    align-items: center;
    gap: 8px;
    margin-left: 24px;
}

.check input {
    appearance: none;
    width: 13px;
    height: 13px;
    border: 1px solid #333;
}

.check input:checked::before {
    content: "";
    display: block;
    width: 8px;
    height: 4px;
    margin: 2px 0 0 2px;
    border: 1px solid #333;
    border-width: 0 0 1px 1px;
    transform: rotate(-45deg);
}

.box { border: 1px solid var(--dark); }

.size-grid {
    display: grid;
    grid-template-columns: 56px 94px 59px 59px 82px 1fr;
    grid-template-rows: 31px 36px 28px 25px;
    align-items: start;
    height: 133px;
    margin: 0 6px 0 4px;
    padding: 3px 5px 0 4px;
}

.size-grid label, .result-grid label {
    line-height: 21px;
    white-space: nowrap;
}

.unit {
    padding-left: 12px;
    font-family: "Liberation Mono", monospace;
    font-size: 10px;
    line-height: 22px;
}

.size-grid .unit:nth-child(6n) { padding-left: 15px; }
.size-grid .per { padding-left: 8px; }

.spin {
    display: flex;
    height: 21px;
    border: 1px solid #abadb3;
    background: #fff;
}

.spin input {
    flex: 1;
    min-width: 0;
    height: 16px;
    border: none;
    outline: none;
    background: none;
    font-family: "DejaVu Sans Mono", monospace;
    font-size: 10px;
    text-align: center;
}

.spin.left { flex-direction: row-reverse; }

.spin.density { width: 91px; }

.arrows {
    display: flex;
    flex-direction: column;
    width: 16px;
    padding: 0 1px 1px;
}

.arrows button {
    display: flex;
    align-items: center;
    justify-content: center;
    flex: 1;
    border: 1px solid #b4b4b4;
    border-top: none;
    background: var(--face);
}

.arrows button::before {
    content: "";
    border: 3px solid transparent;
    border-top: none;
    border-bottom: 3px solid #000;
}

.arrows button:last-child::before {
    border-top: 3px solid #000;
    border-bottom: none;
}

.compare {
    grid-column: 4 / -1;
    align-self: end;
    justify-self: end;
}

.btn {
    border: 1px solid var(--btn-border);
    background: var(--btn);
}

.actions {
    display: flex;
    justify-content: flex-end;
    padding: 7px 8px 0 0;
}

.btn.primary {
    width: 79px;
    height: 30px;
    color: #3399ff;
}

.other {
    margin: 0 7px 0 6px;
    padding: 10px 0 8px 6px;
    border: 1px solid #dcdcdc;
}

.other legend {
    height: 14px;
}

.other-row {
    display: grid;
    grid-template-columns: 134px 119px 1fr;
}

.field {
    display: flex;
    align-items: center;
    gap: 8px;
}

.field .spin { width: 63px; }
.field .spin.font { width: 69px; }

.result-head {
    display: flex;
    align-items: flex-end;
    justify-content: space-between;
    padding: 10px 10px 6px 9px;
}

.btn.small {
    width: 80px;
    height: 21px;
}

.result-grid {
    display: grid;
    grid-template-columns: 57px 61px 67px 57px 61px 1fr;
    grid-template-rows: 33px 32px 34px 35px 21px;
    align-items: start;
    height: 190px;
    margin: 0 5px 0 6px;
    padding: 14px 0 0 20px;
}

.result-grid .long { margin-left: -15px; }

.result-grid .unit { padding-left: 26px; }

.result-grid input {
    width: 61px;
    height: 21px;
    padding-bottom: 2px;
    border: 1px solid #7a7a7a;
    box-shadow: inset 0 0 0 1px #fff;
    background: var(--green);
    font-family: "DejaVu Sans Mono", monospace;
    font-size: 10px;
    text-align: center;
}

.result-grid .gray { background: var(--face); }

.file-row {
    display: flex;
    justify-content: flex-end;
    gap: 7px;
    padding: 5px 11px 0 0;
}

.file-row .btn {
    width: 62px;
    height: 23px;
}

/* 绘图区 */
.view {
    display: flex;
    flex-direction: column;
    flex: 1;
    min-width: 0;
    padding-bottom: 24px;
}

.view-tabs {
    height: 20px;
    padding-left: 2px;
}

.view-tabs button {
    width: 59px;
    height: 18px;
}

.view-tabs .active {
    width: 64px;
    height: 21px;
}

.canvas {
    flex: 1;
    min-height: 0;
    padding: 1px 2px 2px 3px;
    border: 1px solid var(--line);
}

.canvas svg {
    display: block;
    width: 100%;
    height: 100%;
    background: #000;
}

.output {
    flex: none;
    height: 119px;
    margin-top: 1px;
    border: 1px solid #e3e3e3;
    border-top: 2px solid #787878;
    border-left: 2px solid #787878;
    outline: none;
    resize: none;
    background: var(--green);
    line-height: 18px;
    text-spacing-trim: space-all;
}

/* 图纸线型 */
.white, .gray-line, .cyan, .shape, .dim, .leader, .symbol, .axis { fill: none; }

.white { stroke: #f0f0f0; }
.gray-line { stroke: #c8c8c8; }
.cyan { stroke: #00d8d8; }
.cyan.bold { stroke-width: 2; }
.shape { stroke: #e8e8e8; }
.axis { stroke: #0000c8; }
.dim { stroke: #00c800; }
.dim.thick { stroke: #00ff00; stroke-width: 2; }
.leader { stroke: #d0d0d0; }
.symbol { stroke: #fff; }

.frame {
    fill: none;
    stroke: #ffff00;
    stroke-width: 3;
}

.arrow { fill: #00ff00; }

.zone {
    fill: #00b4b4;
    font-family: "Liberation Sans", sans-serif;
    font-size: 8px;
    text-anchor: middle;
}

.dim-text {
    fill: #00e000;
    font-family: "Liberation Sans", sans-serif;
    font-size: 11px;
    text-anchor: middle;
}

.sans {
    fill: #f0f0f0;
    font-family: "Liberation Sans", sans-serif;
    font-size: 8px;
}

.mid { text-anchor: middle; }

.cn {
    fill: #dcdcdc;
    font-family: "Liberation Serif", "Noto Sans CJK SC", sans-serif;
    font-weight: 300;
    text-anchor: middle;
}

.cn .hi { fill: #fff; }
.cn .start { text-anchor: start; }
.side, .s9 { font-size: 9px; }
.s8, .tiny { font-size: 8px; }
.s7 { font-size: 7px; }
.s11 { font-size: 11px; }

.en {
    fill: #dcdcdc;
    font-family: "Liberation Serif", serif;
    font-size: 6px;
    text-anchor: middle;
}

/* 状态栏 */
.statusbar {
    display: flex;
    flex: none;
    align-items: center;
    justify-content: flex-end;
    height: 26px;
    padding-right: 6px;
    border-top: 1px solid var(--line);
    font-family: "Noto Sans CJK SC", sans-serif;
}

.statusbar svg {
    width: 19px;
    height: 19px;
    margin: 0 12px 0 14px;
}

.drop {
    border: 3px solid transparent;
    border-top-color: #000;
    border-bottom: none;
}
```
